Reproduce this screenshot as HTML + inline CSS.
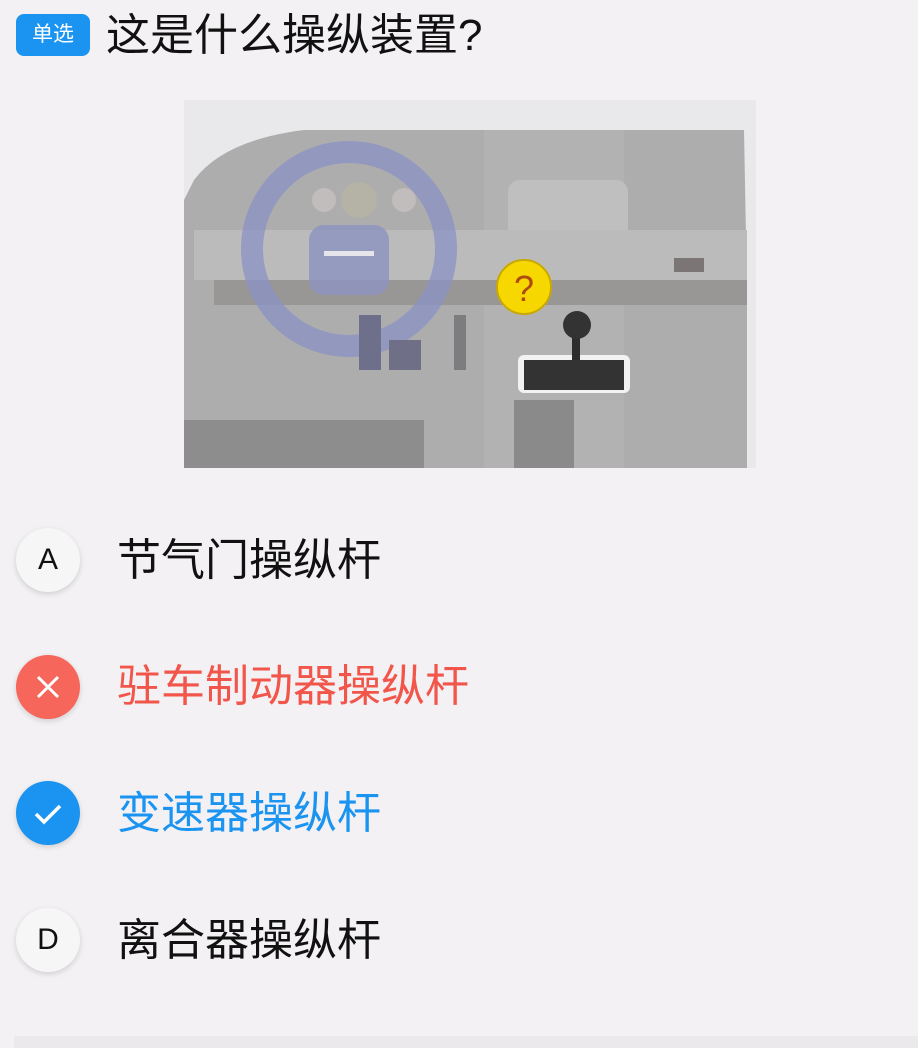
<!DOCTYPE html>
<html><head><meta charset="utf-8"><style>
body{margin:0;width:918px;height:1048px;background:#f3f1f4;font-family:"Liberation Sans","Noto Sans CJK SC",sans-serif;position:relative;overflow:hidden}
.tag{position:absolute;left:16px;top:14px;width:74px;height:42px;background:#1a94f0;border-radius:8px;color:#fff;font-size:21px;line-height:42px;text-align:center}
.title{position:absolute;left:106px;top:4px;font-size:44px;line-height:64px;color:#111}
.c{position:absolute;left:16px;width:64px;height:64px;border-radius:50%;box-shadow:0 2px 6px rgba(0,0,0,.15);text-align:center;line-height:64px;font-size:32px}
.t{position:absolute;left:117px;font-size:44px;line-height:60px;color:#111}
.bar{position:absolute;left:14px;right:0;top:1036px;height:12px;background:#ebe9ec}
</style></head><body>
<div class="tag">单选</div>
<div class="title">这是什么操纵装置?</div>
<svg style="position:absolute;left:184px;top:100px" width="572" height="368" viewBox="0 0 572 368">
<rect width="572" height="368" fill="#e9e8ea"/>
<path d="M10 80 Q40 40 120 30 L560 30 L563 190 L563 368 L0 368 L0 100Z" fill="#aeadae"/>
<rect x="300" y="30" width="140" height="338" fill="#b3b2b3"/>
<rect x="324" y="80" width="120" height="90" rx="12" fill="#c0bfc0"/>
<rect x="335" y="155" width="100" height="25" fill="#8a8384"/>
<rect x="10" y="130" width="553" height="50" fill="#bcbbbc"/>
<rect x="30" y="180" width="533" height="25" fill="#999696"/>
<rect x="0" y="320" width="240" height="48" fill="#8e8d8e"/>
<rect x="330" y="300" width="60" height="68" fill="#8b8a8b"/>
<circle cx="175" cy="100" r="18" fill="#b5b3a5"/>
<circle cx="140" cy="100" r="12" fill="#c2bdbd"/><circle cx="220" cy="100" r="12" fill="#c2bdbd"/>
<circle cx="165" cy="149" r="97" fill="none" stroke="#8a92c4" stroke-width="22" opacity=".75"/>
<rect x="125" y="125" width="80" height="70" rx="15" fill="#8e94c0" opacity=".85"/>
<rect x="140" y="151" width="50" height="5" fill="#e6e6ea"/>
<rect x="175" y="215" width="22" height="55" fill="#6e6f8a"/><rect x="205" y="240" width="32" height="30" fill="#6f6f88"/><rect x="270" y="215" width="12" height="55" fill="#7d7d80"/>
<rect x="334" y="255" width="112" height="38" rx="6" fill="#f2f2f2"/>
<rect x="340" y="260" width="100" height="30" fill="#333"/>
<rect x="388" y="225" width="8" height="35" fill="#2d2d2d"/>
<circle cx="393" cy="225" r="14" fill="#333"/>
<circle cx="340" cy="187" r="27" fill="#f6d800" stroke="#c9a800" stroke-width="2"/>
<text x="340" y="201" font-size="36" text-anchor="middle" fill="#b04a10" font-family="Liberation Sans">?</text>
<rect x="490" y="158" width="30" height="14" fill="#7c7576"/>
</svg>
<div class="c" style="top:528px;background:#f6f6f6;color:#111;font-size:30px">A</div>
<div class="t" style="top:531px">节气门操纵杆</div>
<div class="c" style="top:655px;background:#f7665a;color:#fff"><svg width="64" height="64" style="position:absolute;left:0;top:0"><path d="M22 22L42 42M42 22L22 42" stroke="#fff" stroke-width="3"/></svg></div>
<div class="t" style="top:657px;color:#f2564b">驻车制动器操纵杆</div>
<div class="c" style="top:781px;background:#1a94f0"><svg width="64" height="64" style="position:absolute;left:0;top:0"><path d="M20 33L28 41L44 25" fill="none" stroke="#fff" stroke-width="3.5"/></svg></div>
<div class="t" style="top:784px;color:#1a94f0">变速器操纵杆</div>
<div class="c" style="top:908px;background:#f6f6f6;color:#111;font-size:30px">D</div>
<div class="t" style="top:911px">离合器操纵杆</div>
<div class="bar"></div>
</body></html>
